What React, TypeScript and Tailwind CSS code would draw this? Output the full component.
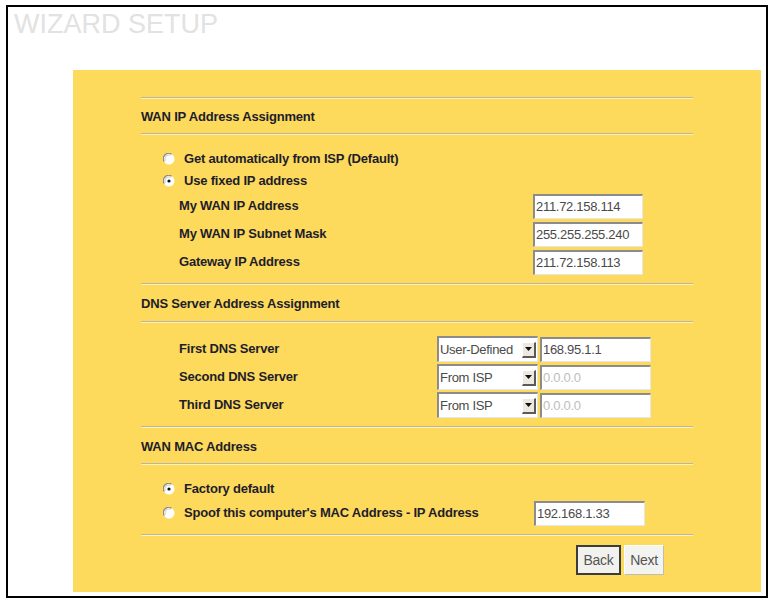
import React from "react";

const F = { fontFamily: '"Liberation Sans", Arial, sans-serif' };

function Divider() {
  return <div className="h-[2px] w-full border-t border-b border-t-[#b9b6a6] border-b-[#fff1b8]" />;
}

function Radio({ checked }: { checked?: boolean }) {
  return (
    <svg width="12" height="12" viewBox="0 0 12 12" className="shrink-0">
      <circle cx="6" cy="6" r="5.5" fill="#ffffff" />
      <path d="M1.2 8.5 A5.3 5.3 0 0 1 8.5 1.2" fill="none" stroke="#8a8a8a" strokeWidth="1.2" />
      <path d="M2.3 7.6 A4 4 0 0 1 7.6 2.3" fill="none" stroke="#c8c8c8" strokeWidth="1" />
      {checked && <circle cx="6" cy="6" r="1.6" fill="#111111" />}
    </svg>
  );
}

function TextBox({ value, w, disabled }: { value: string; w: string; disabled?: boolean }) {
  return (
    <div
      className={`${w} h-[25px] bg-white border-t-2 border-l-2 border-b border-r border-t-[#8c8c8c] border-l-[#8c8c8c] border-b-[#e6e6e6] border-r-[#e6e6e6] flex items-center pl-[1px] text-[13px] tracking-[-0.3px] ${disabled ? "text-[#bdbdbd]" : "text-[#4a4a4a]"}`}
      style={F}
    >
      {value}
    </div>
  );
}

function Select({ value }: { value: string }) {
  return (
    <div className="w-[101px] h-[26px] bg-white border-t-2 border-l-2 border-b border-r border-t-[#8c8c8c] border-l-[#8c8c8c] border-b-[#e6e6e6] border-r-[#e6e6e6] flex items-center justify-between pl-[1px] pr-[1px]">
      <span className="text-[13px] tracking-[-0.3px] text-[#4a4a4a]" style={F}>
        {value}
      </span>
      <div className="w-[14px] h-[16px] bg-[#ece9e0] border-t border-l border-b-2 border-r-2 border-t-white border-l-white border-b-[#5a5a5a] border-r-[#5a5a5a] flex items-center justify-center">
        <svg width="7" height="4" viewBox="0 0 7 4">
          <path d="M0 0 L7 0 L3.5 4 Z" fill="#111" />
        </svg>
      </div>
    </div>
  );
}

const label = "text-[13px] font-bold tracking-[-0.2px] text-[#1d1d2b]";

function Heading({ children, h }: { children: React.ReactNode; h: string }) {
  return (
    <div className={`${h} flex items-center pt-[2px]`}>
      <span className={label} style={F}>
        {children}
      </span>
    </div>
  );
}

export default function App() {
  return (
    <div className="w-[770px] h-[601px] bg-white pt-[5px] pl-[6px]" style={F}>
      <div className="w-[762px] h-[593px] border-2 border-black bg-white flex flex-col">
        <div className="mt-[4px] pl-[6px] text-[27px] leading-[27px] text-[#e2e2e2]" style={F}>
          WIZARD SETUP
        </div>
        <div className="mt-[32px] ml-[65px] w-[688px] h-[522px] bg-[#fdd95c] pl-[68px] pt-[27px]">
          <div className="w-[552px] flex flex-col">
            <Divider />
            <Heading h="h-[34px]">WAN IP Address Assignment</Heading>
            <Divider />
            <div className="h-[13px]" />
            <div className="h-[22px] flex items-center pl-[22px] gap-[9px]">
              <Radio />
              <span className={label} style={F}>Get automatically from ISP (Default)</span>
            </div>
            <div className="h-[22px] flex items-center pl-[22px] gap-[9px]">
              <Radio checked />
              <span className={label} style={F}>Use fixed IP address</span>
            </div>
            {[
              ["My WAN IP Address", "211.72.158.114"],
              ["My WAN IP Subnet Mask", "255.255.255.240"],
              ["Gateway IP Address", "211.72.158.113"],
            ].map(([l, v]) => (
              <div key={l} className="h-[28px] flex items-center pl-[38px]">
                <span className={`${label} w-[354px]`} style={F}>{l}</span>
                <TextBox value={v} w="w-[110px]" />
              </div>
            ))}
            <div className="h-[7px]" />
            <Divider />
            <Heading h="h-[36px]">DNS Server Address Assignment</Heading>
            <Divider />
            <div className="h-[12px]" />
            {[
              ["First DNS Server", "User-Defined", "168.95.1.1", false],
              ["Second DNS Server", "From ISP", "0.0.0.0", true],
              ["Third DNS Server", "From ISP", "0.0.0.0", true],
            ].map(([l, s, v, d]) => (
              <div key={l as string} className="h-[28px] flex items-center pl-[38px]">
                <span className={`${label} w-[258px]`} style={F}>{l as string}</span>
                <Select value={s as string} />
                <div className="w-[2px]" />
                <TextBox value={v as string} w="w-[111px]" disabled={d as boolean} />
              </div>
            ))}
            <div className="h-[7px]" />
            <Divider />
            <Heading h="h-[35px]">WAN MAC Address</Heading>
            <Divider />
            <div className="h-[12px]" />
            <div className="h-[24px] flex items-center pl-[22px] gap-[9px]">
              <Radio checked />
              <span className={label} style={F}>Factory default</span>
            </div>
            <div className="h-[24px] flex items-center pl-[22px] gap-[9px]">
              <Radio />
              <span className={`${label} w-[350px]`} style={F}>Spoof this computer's MAC Address - IP Address</span>
              <div className="-ml-[9px]">
                <TextBox value="192.168.1.33" w="w-[111px]" />
              </div>
            </div>
            <div className="h-[9px]" />
            <Divider />
            <div className="h-[9px]" />
            <div className="flex justify-end pr-[29px] gap-[3px]">
              <button className="w-[45px] h-[30px] bg-[#f1f1ee] border-2 border-[#3c3c3c] text-[14px] text-[#555] tracking-[-0.3px]" style={F}>
                Back
              </button>
              <button className="w-[40px] h-[30px] bg-[#f3f3f0] border border-t-white border-l-white border-b-[#bdbdb5] border-r-[#bdbdb5] text-[14px] text-[#555] tracking-[-0.3px]" style={F}>
                Next
              </button>
            </div>
          </div>
        </div>
      </div>
    </div>
  );
}
